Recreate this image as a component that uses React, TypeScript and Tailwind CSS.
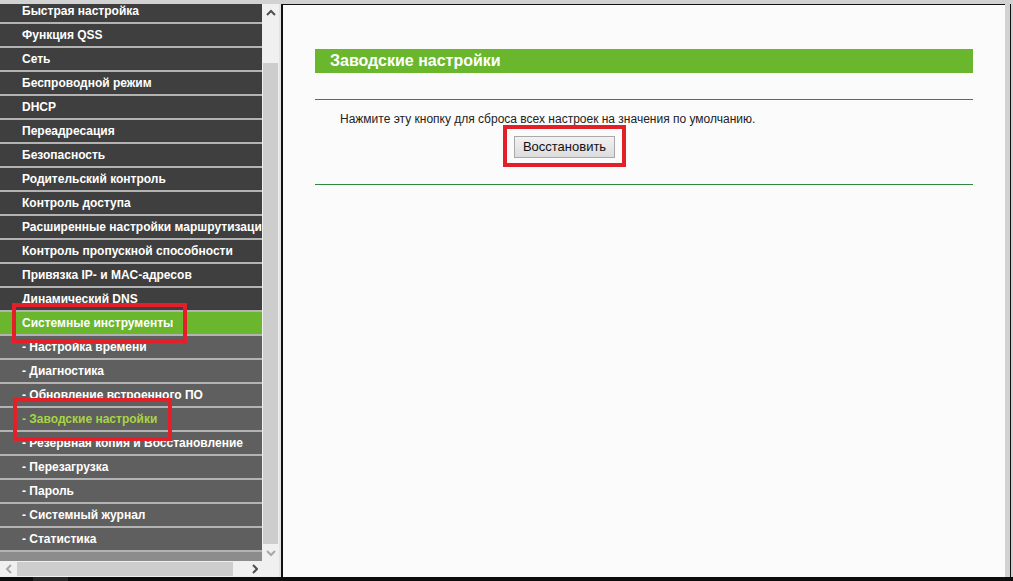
const menu: { label: string; sub?: boolean; active?: boolean; current?: boolean }[] = [
  { label: "Быстрая настройка" },
  { label: "Функция QSS" },
  { label: "Сеть" },
  { label: "Беспроводной режим" },
  { label: "DHCP" },
  { label: "Переадресация" },
  { label: "Безопасность" },
  { label: "Родительский контроль" },
  { label: "Контроль доступа" },
  { label: "Расширенные настройки маршрутизации" },
  { label: "Контроль пропускной способности" },
  { label: "Привязка IP- и MAC-адресов" },
  { label: "Динамический DNS" },
  { label: "Системные инструменты", active: true },
  { label: "- Настройка времени", sub: true },
  { label: "- Диагностика", sub: true },
  { label: "- Обновление встроенного ПО", sub: true },
  { label: "- Заводские настройки", sub: true, current: true },
  { label: "- Резервная копия и Восстановление", sub: true },
  { label: "- Перезагрузка", sub: true },
  { label: "- Пароль", sub: true },
  { label: "- Системный журнал", sub: true },
  { label: "- Статистика", sub: true },
];

function Chevron({ dir, dark }: { dir: "up" | "down" | "left" | "right"; dark?: boolean }) {
  const paths = {
    up: "M1 6 L5 2 L9 6",
    down: "M1 2 L5 6 L9 2",
    left: "M6 1 L2 5 L6 9",
    right: "M3 1 L7 5 L3 9",
  };
  const wide = dir === "up" || dir === "down";
  return (
    <svg
      width={wide ? 10 : 8}
      height={wide ? 8 : 10}
      viewBox={wide ? "0 0 10 8" : "0 0 8 10"}
      fill="none"
      stroke={dark ? "#505050" : "#a8a8a8"}
      strokeWidth="2"
    >
      <path d={paths[dir]} />
    </svg>
  );
}

function Sidebar() {
  return (
    <div className="flex w-[279px] flex-col">
      <div className="flex min-h-0 flex-1">
        <div className="relative w-[262px] overflow-hidden bg-[#8c8c8c]">
          <ul className="mt-[-4px]">
            {menu.map((item) => (
              <li
                key={item.label}
                className={`h-[24px] overflow-hidden whitespace-nowrap border-b-2 border-[#b3b3b3] pl-[22px] text-[12px] leading-[22px] font-bold ${
                  item.active
                    ? "bg-[#6ab72d] text-white"
                    : item.current
                      ? "bg-[#5f5f5f] text-[#a6d544]"
                      : item.sub
                        ? "bg-[#5f5f5f] text-white"
                        : "bg-[#3f3f3f] text-white"
                }`}
              >
                {item.label}
              </li>
            ))}
          </ul>
          <div className="absolute left-[12px] top-[299px] h-[40px] w-[175px] border-4 border-[#e3202a]" />
          <div className="absolute left-[13px] top-[394px] h-[43px] w-[159px] border-4 border-[#e3202a]" />
        </div>
        <div className="flex w-[17px] flex-col bg-[#f0f0f0]">
          <div className="flex h-[17px] items-center justify-center">
            <Chevron dir="up" dark />
          </div>
          <div className="mx-[1px] mt-[42px] flex-1 bg-[#cdcdcd]" />
          <div className="flex h-[17px] items-center justify-center">
            <Chevron dir="down" />
          </div>
        </div>
      </div>
      <div className="flex h-[16px] bg-[#f0f0f0]">
        <div className="flex w-[17px] items-center justify-center">
          <Chevron dir="left" />
        </div>
        <div className="my-[1px] w-[216px] bg-[#cdcdcd]" />
        <div className="flex-1" />
        <div className="flex w-[17px] items-center justify-center">
          <Chevron dir="right" dark />
        </div>
        <div className="w-[17px] bg-[#f0f0f0]" />
      </div>
    </div>
  );
}

export default function App() {
  return (
    <div className="flex h-[581px] w-[1013px] flex-col overflow-hidden bg-[#d2d2d2] font-['Liberation_Sans',Arial,sans-serif]">
      <div className="h-[4px] bg-[#d2d2d2]" />
      <div className="flex min-h-0 flex-1">
        <Sidebar />
        <div className="w-[2px] bg-[#e3e3e3]" />
        <div className="w-[2px] bg-[#111]" />
        <main className="w-[722px] border-t border-[#111] bg-[#fbfbfb] pl-[32px] pt-[44px]">
          <div className="w-[658px]">
            <h1 className="h-[24px] bg-[#6ab72d] pl-[15px] text-[16px] leading-[24px] font-bold text-white">
              Заводские настройки
            </h1>
            <div className="mt-[26px] h-[1px] bg-[#2f8744]" />
            <p className="mt-[12px] pl-[25px] text-[12px] leading-[14px] text-[#222]">
              Нажмите эту кнопку для сброса всех настроек на значения по умолчанию.
            </p>
            <div className="mt-[-1px] flex">
              <div className="ml-[188px] border-4 border-[#e3202a] px-[7px] py-[5px]">
                <button
                  type="button"
                  className="h-[22px] w-[101px] border border-[#a9a9a9] bg-gradient-to-b from-[#f2f2f2] to-[#dcdcdc] text-[13px] leading-[20px] text-[#111]"
                >
                  Восстановить
                </button>
              </div>
            </div>
            <div className="mt-[17px] h-[1px] bg-[#2f8744]" />
          </div>
        </main>
        <div className="w-[5px] bg-[#d2d2d2]" />
        <div className="w-[1px] bg-[#111]" />
        <div className="w-[2px] bg-[#d2d2d2]" />
      </div>
      <div className="flex h-[4px] bg-[#0d0d0d]">
        <div className="ml-[33px] w-[35px] bg-[#262626]" />
      </div>
    </div>
  );
}
